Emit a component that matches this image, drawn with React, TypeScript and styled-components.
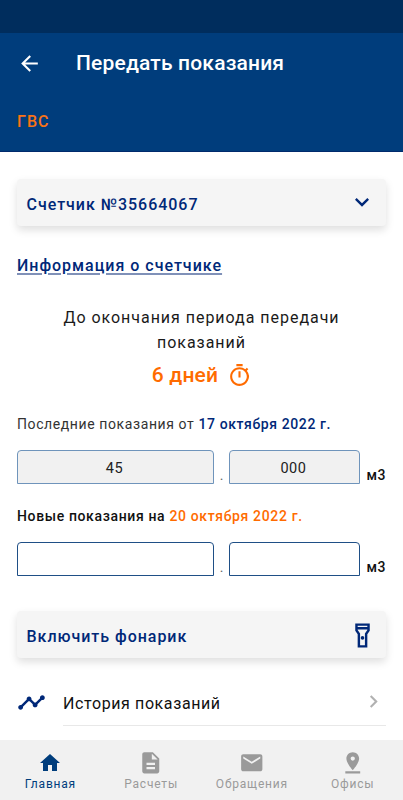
import React from "react";
import styled, { createGlobalStyle } from "styled-components";
import {
  MdArrowBack,
  MdDescription,
  MdEmail,
  MdExpandMore,
  MdChevronRight,
  MdHome,
  MdOutlineFlashlightOn,
  MdOutlineTimer,
  MdPinDrop,
  MdTimeline,
} from "react-icons/md";

const navy = "#002878";
const brand = "#003d7c";
const orange = "#ff6b00";

const GlobalStyle = createGlobalStyle`
  * { box-sizing: border-box; }
  body { margin: 0; background: #fff; font-family: Roboto, sans-serif; }
  svg { display: block; flex: none; }
`;

const Screen = styled.div`
  width: 403px;
  height: 800px;
  display: flex;
  flex-direction: column;
  overflow: hidden;
  background: #fff;
`;

const StatusBar = styled.div`
  height: 33px;
  flex: none;
  background: #002d5d;
`;

const Header = styled.header`
  height: 119px;
  flex: none;
  background: ${brand};
  border-bottom: 1px solid #002a6c;
`;

const TitleBar = styled.div`
  height: 60px;
  display: flex;
  align-items: center;
  padding-left: 17px;
  color: #fff;
`;

const Title = styled.h1`
  margin: 0 0 0 34px;
  font-size: 21px;
  line-height: 28px;
  font-weight: 500;
  letter-spacing: 0.17px;
`;

const Tab = styled.div`
  height: 56px;
  padding-left: 17px;
  font-size: 16px;
  line-height: 57px;
  font-weight: 500;
  letter-spacing: 1px;
  color: #f97316;
`;

const Main = styled.main`
  flex: 1;
  min-height: 0;
  padding: 27px 17px 0;
`;

const Card = styled.button<{ $top?: number; $right: number }>`
  width: 100%;
  height: 47px;
  margin-top: ${(p) => p.$top ?? 0}px;
  display: flex;
  align-items: center;
  justify-content: space-between;
  padding: 3px ${(p) => p.$right}px 0 9.5px;
  border: 0;
  border-radius: 4px;
  background: #f5f5f5;
  box-shadow: 0 4px 9px rgba(0, 0, 0, 0.13);
  color: ${navy};
  font-family: inherit;
  font-size: 16px;
  font-weight: 500;
  letter-spacing: 0.97px;
`;

const ExpandIcon = styled(MdExpandMore)`
  margin-top: -4px;
`;

const FlashlightIcon = styled(MdOutlineFlashlightOn)`
  margin-top: -2px;
`;

const InfoLink = styled.a`
  display: block;
  width: max-content;
  margin-top: 28px;
  font-size: 16px;
  line-height: 24px;
  font-weight: 500;
  letter-spacing: 0.99px;
  color: ${navy};
  text-decoration: underline;
  text-decoration-color: #8091b8;
  text-decoration-thickness: 2px;
  text-underline-offset: 2px;
`;

const Notice = styled.p`
  margin: 27px 0 0;
  text-align: center;
  font-size: 16px;
  line-height: 25px;
  letter-spacing: 0.97px;
  color: #1a1a1a;
`;

const Remaining = styled.div`
  height: 34px;
  margin-top: 3px;
  display: flex;
  align-items: center;
  justify-content: center;
  gap: 9px;
  padding-left: 1px;
  color: ${orange};
  font-size: 21px;
  font-weight: 500;
  letter-spacing: 0.2px;
`;

const Caption = styled.div<{ $strong?: boolean; $top: number }>`
  margin-top: ${(p) => p.$top}px;
  font-size: 14px;
  line-height: 20px;
  letter-spacing: ${(p) => (p.$strong ? 0.64 : 0.6)}px;
  font-weight: ${(p) => (p.$strong ? 500 : 400)};
  color: ${(p) => (p.$strong ? "#111" : "#333")};
`;

const DateText = styled.span<{ $accent?: boolean }>`
  font-weight: 500;
  color: ${(p) => (p.$accent ? orange : navy)};
`;

const Reading = styled.div`
  margin-top: 16px;
  height: 34px;
  display: flex;
  align-items: flex-end;
`;

const Field = styled.input<{ $width: number }>`
  flex: none;
  width: ${(p) => p.$width}px;
  height: 34px;
  padding: 3px 2px 0 0;
  border: 1px solid #1f4f86;
  border-radius: 4px 4px 0 0;
  background: #fff;
  text-align: center;
  font-family: inherit;
  font-size: 14.5px;
  letter-spacing: 0.6px;
  color: #222;
  outline: 0;
  &:disabled {
    background: #f1f1f1;
    border-color: #6f94bb;
    color: #222;
    opacity: 1;
  }
`;

const Dot = styled.span`
  flex: none;
  width: 15px;
  text-align: center;
  font-size: 14px;
  line-height: 18px;
  color: #666;
`;

const Unit = styled.span`
  flex: none;
  margin-left: 6.5px;
  font-size: 14px;
  line-height: 17px;
  font-weight: 500;
  letter-spacing: 0.6px;
  color: #111;
`;

const History = styled.div`
  display: flex;
  align-items: center;
  height: 67px;
  color: ${navy};
`;

const HistoryBody = styled.div`
  flex: 1;
  height: 68px;
  margin-left: 17px;
  padding: 23px 0 0;
  display: flex;
  justify-content: space-between;
  border-bottom: 1px solid #e8e8e8;
  font-size: 16px;
  line-height: 45px;
  letter-spacing: 0.6px;
  color: #111;
  svg {
    margin-top: 8px;
    color: #b1b1b1;
  }
`;

const HistoryIcon = styled.span`
  display: block;
  margin-top: 21px;
`;

const BottomNav = styled.nav`
  height: 60px;
  flex: none;
  display: grid;
  grid-template-columns: repeat(4, 1fr);
  background: #f1f1f1;
`;

const NavItem = styled.a<{ $active?: boolean }>`
  display: flex;
  flex-direction: column;
  align-items: center;
  padding-top: 10px;
  font-size: 12px;
  line-height: 18px;
  letter-spacing: 0.8px;
  color: ${(p) => (p.$active ? brand : "#9a9a9a")};
`;

const NavIcon = styled.span`
  height: 25px;
  display: flex;
  align-items: center;
`;

function ReadingRow({ whole, fraction, locked }: { whole: string; fraction: string; locked?: boolean }) {
  return (
    <Reading>
      <Field $width={197} defaultValue={whole} disabled={locked} />
      <Dot>.</Dot>
      <Field $width={131} defaultValue={fraction} disabled={locked} />
      <Unit>м3</Unit>
    </Reading>
  );
}

export default function App() {
  return (
    <Screen>
      <GlobalStyle />
      <StatusBar />
      <Header>
        <TitleBar>
          <MdArrowBack size={25} />
          <Title>Передать показания</Title>
        </TitleBar>
        <Tab>ГВС</Tab>
      </Header>
      <Main>
        <Card $right={10}>
          Счетчик №35664067
          <ExpandIcon size={28} />
        </Card>
        <InfoLink>Информация о счетчике</InfoLink>
        <Notice>
          До окончания периода передачи
          <br />
          показаний
        </Notice>
        <Remaining>
          6 дней
          <MdOutlineTimer size={25} />
        </Remaining>
        <Caption $top={22}>
          Последние показания от <DateText>17 октября 2022 г.</DateText>
        </Caption>
        <ReadingRow whole="45" fraction="000" locked />
        <Caption $top={22} $strong>
          Новые показания на <DateText $accent>20 октября 2022 г.</DateText>
        </Caption>
        <ReadingRow whole="" fraction="" />
        <Card $top={35} $right={9}>
          Включить фонарик
          <FlashlightIcon size={29} />
        </Card>
        <History>
          <HistoryIcon>
            <MdTimeline size={29} />
          </HistoryIcon>
          <HistoryBody>
            История показаний
            <MdChevronRight size={25} />
          </HistoryBody>
        </History>
      </Main>
      <BottomNav>
        <NavItem $active>
          <NavIcon>
            <MdHome size={24} />
          </NavIcon>
          Главная
        </NavItem>
        <NavItem>
          <NavIcon>
            <MdDescription size={25.5} />
          </NavIcon>
          Расчеты
        </NavItem>
        <NavItem>
          <NavIcon>
            <MdEmail size={25.5} />
          </NavIcon>
          Обращения
        </NavItem>
        <NavItem>
          <NavIcon>
            <MdPinDrop size={25.5} />
          </NavIcon>
          Офисы
        </NavItem>
      </BottomNav>
    </Screen>
  );
}
